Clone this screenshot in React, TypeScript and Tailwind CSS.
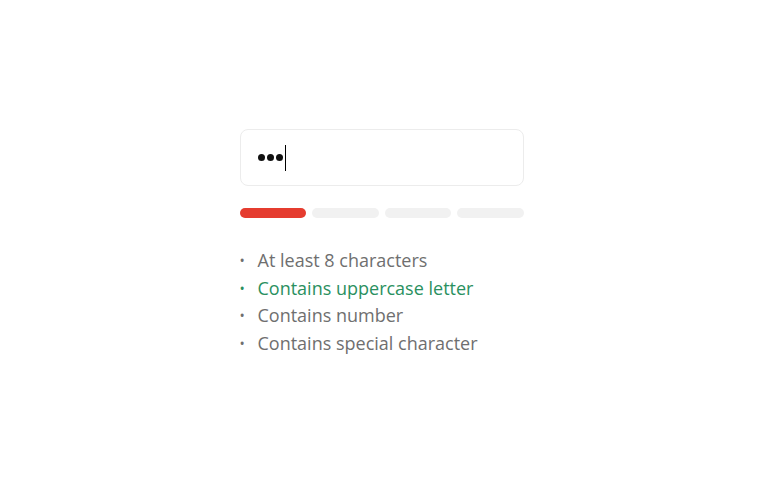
const rules = [
  { label: 'At least 8 characters', met: false },
  { label: 'Contains uppercase letter', met: true },
  { label: 'Contains number', met: false },
  { label: 'Contains special character', met: false },
];

export default function App() {
  const strength = 1;
  return (
    <div className="w-[770px] h-[484px] bg-white flex justify-center" style={{ fontFamily: '"Open Sans", "Noto Sans", sans-serif' }}>
      <div className="w-[284px] mt-[129px] ml-[-7px]">
        {/* Password field */}
        <div className="h-[57px] rounded-lg border border-[#ececec] flex items-center px-[17px]">
          <div className="flex items-center gap-[2px]">
            <span className="w-[7px] h-[7px] rounded-full bg-[#111]" />
            <span className="w-[7px] h-[7px] rounded-full bg-[#111]" />
            <span className="w-[7px] h-[7px] rounded-full bg-[#111]" />
          </div>
          <span className="ml-[2px] w-px h-[26px] bg-black" />
        </div>

        {/* Strength meter */}
        <div className="mt-[22px] grid grid-cols-4 gap-[6px]">
          {[0, 1, 2, 3].map((i) => (
            <div key={i} className={i < strength ? 'h-[10px] rounded-full bg-[#e53c2f]' : 'h-[10px] rounded-full bg-[#f1f1f1]'} />
          ))}
        </div>

        {/* Requirements */}
        <ul className="mt-[29px] text-[18px] leading-[27.5px]">
          {rules.map((r) => (
            <li key={r.label} className={r.met ? 'flex items-center text-[#2a9060]' : 'flex items-center text-[#6f6f6f]'}>
              <span className="w-[18px] text-[14px]">•</span>
              <span>{r.label}</span>
            </li>
          ))}
        </ul>
      </div>
    </div>
  );
}
